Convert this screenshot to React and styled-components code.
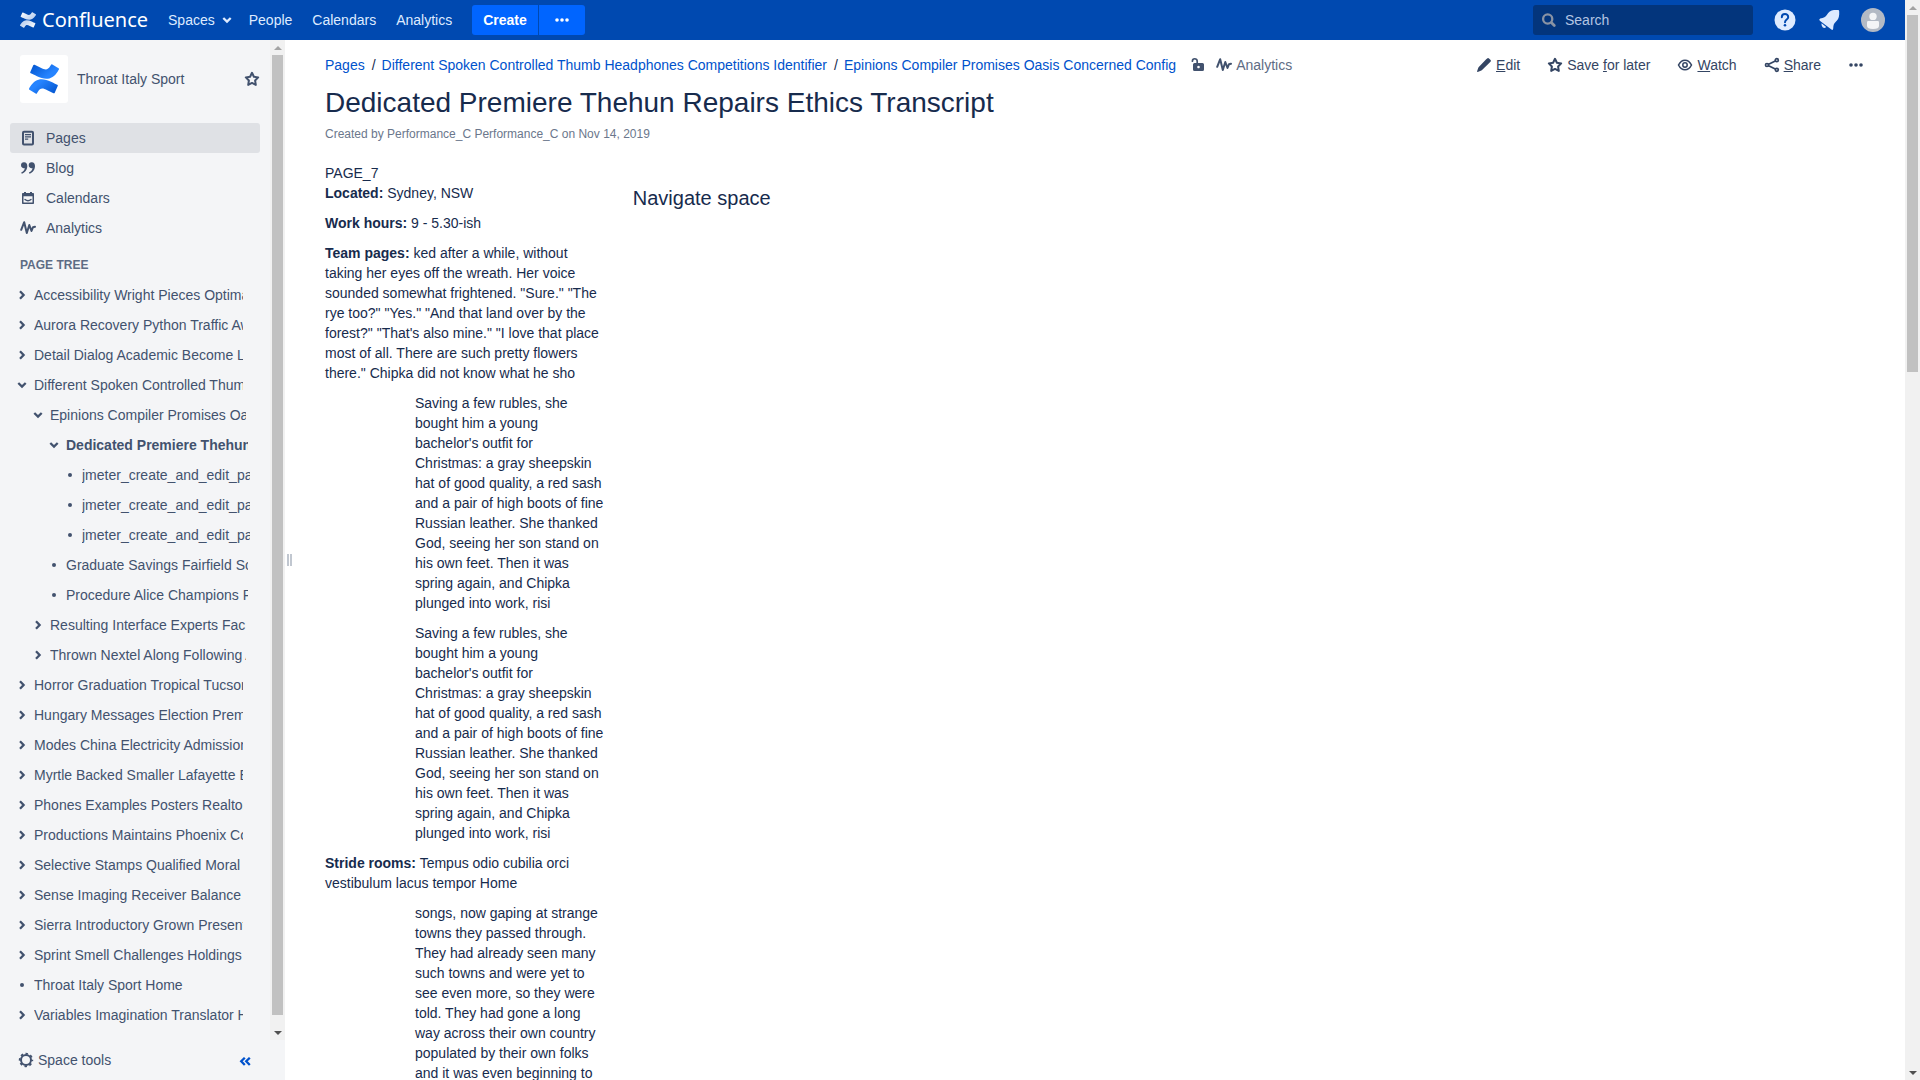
import React from "react";
import styled, { createGlobalStyle, css } from "styled-components";

const Global = createGlobalStyle`
  *, *::before, *::after { box-sizing: border-box; }
  body {
    margin: 0;
    background: #fff;
    color: #172b4d;
    font: 14px/20px "Liberation Sans", Arial, sans-serif;
  }
  a { color: inherit; text-decoration: none; }
  ul { list-style: none; margin: 0; padding: 0; }
  button { font: inherit; color: inherit; background: none; border: 0; margin: 0; padding: 0; cursor: pointer; }
`;

const Window = styled.div`
  display: flex;
  height: 100vh;
  overflow: hidden;
`;
const Page = styled.div`
  flex: 1;
  min-width: 0;
  display: flex;
  flex-direction: column;
`;

/* ---------- scrollbar ---------- */
const Bar = styled.div`
  flex: none;
  width: 15px;
  display: flex;
  flex-direction: column;
  background: #f1f1f1;
`;
const BarArrow = styled.span`
  flex: none;
  height: 15px;
  display: flex;
  align-items: center;
  justify-content: center;
  &::before {
    content: "";
    border: solid transparent;
    border-width: 0 4px;
    ${(p) =>
      p.$down
        ? css`border-top: 4px solid #505050;`
        : css`border-bottom: 4px solid #a3a3a3;`}
  }
`;
const BarTrack = styled.div`
  flex: 1;
  min-height: 0;
  padding: 0 2px;
`;
const BarThumb = styled.div`
  height: ${(p) => p.$size};
  background: #c1c1c1;
`;
function Scrollbar({ size }) {
  return (
    <Bar aria-hidden="true">
      <BarArrow />
      <BarTrack>
        <BarThumb $size={size} />
      </BarTrack>
      <BarArrow $down />
    </Bar>
  );
}

/* ---------- icons ---------- */
const Svg = styled.svg`
  flex: none;
  display: block;
  width: ${(p) => p.$size || 16}px;
  height: ${(p) => p.$size || 16}px;
`;
const line = { fill: "none", stroke: "currentColor", strokeWidth: 2, strokeLinecap: "round", strokeLinejoin: "round" };

const MARK_TOP =
  "M23.131 5.743c.249-.405.531-.89.764-1.25a.764.764 0 0 0-.256-1.034L18.675.404a.764.764 0 0 0-1.058.26c-.195.335-.451.763-.734 1.225-1.966 3.246-3.945 2.85-7.508 1.146L4.437.694a.764.764 0 0 0-1.027.382L1.046 6.422a.764.764 0 0 0 .382 1.003c1.040.49 3.112 1.467 4.965 2.361 6.698 3.246 12.392 3.029 16.738-4.043z";
const MARK_LOW =
  "M.870 18.257c-.248.382-.53.875-.763 1.245a.764.764 0 0 0 .255 1.040l4.965 3.054a.764.764 0 0 0 1.058-.26c.199-.332.454-.763.733-1.221 1.967-3.247 3.945-2.853 7.508-1.146l4.957 2.337a.764.764 0 0 0 1.028-.382l2.364-5.346a.764.764 0 0 0-.382-1c-1.040-.49-3.112-1.467-4.965-2.361C10.911 10.970 5.224 11.185.870 18.257z";

function Mark({ size, from, to }) {
  const id = "mark" + size;
  return (
    <Svg $size={size} viewBox="0 0 24 24" aria-hidden="true">
      <defs>
        <linearGradient id={id + "a"} x1="0" y1="0" x2="1" y2="0.6">
          <stop offset="0" stopColor={from} />
          <stop offset="0.8" stopColor={to} />
        </linearGradient>
        <linearGradient id={id + "b"} x1="1" y1="1" x2="0" y2="0.4">
          <stop offset="0" stopColor={from} />
          <stop offset="0.8" stopColor={to} />
        </linearGradient>
      </defs>
      <path d={MARK_TOP} fill={`url(#${id}a)`} />
      <path d={MARK_LOW} fill={`url(#${id}b)`} />
    </Svg>
  );
}
const Chevron = ({ down }) => (
  <Svg viewBox="0 0 16 16" aria-hidden="true">
    <path {...line} strokeWidth="2.300" strokeLinecap="butt" strokeLinejoin="miter" d={down ? "M4.300 6 8 9.600 11.700 6" : "M6 4.300 9.600 8 6 11.700"} />
  </Svg>
);
const Bullet = () => (
  <Svg viewBox="0 0 16 16" aria-hidden="true">
    <circle cx="8" cy="8" r="2" fill="currentColor" />
  </Svg>
);
const Dots = () => (
  <Svg viewBox="0 0 16 16" aria-hidden="true">
    <g fill="currentColor">
      <circle cx="3" cy="8" r="1.800" />
      <circle cx="8" cy="8" r="1.800" />
      <circle cx="13" cy="8" r="1.800" />
    </g>
  </Svg>
);
const Star = () => (
  <Svg viewBox="0 0 16 16" aria-hidden="true">
    <path {...line} d="M8 1.800 9.900 5.800 14.200 6.400 11.100 9.500 11.800 13.900 8 11.900 4.200 13.900 4.900 9.500 1.800 6.400 6.100 5.800Z" />
  </Svg>
);
const Pulse = () => (
  <Svg viewBox="0 0 16 16" aria-hidden="true">
    <path {...line} d="M1.200 9.800 4.200 2.200 6.800 13 9.300 5 11.500 11 13 7.200 15 6.800" />
  </Svg>
);
const PageIcon = () => (
  <Svg viewBox="0 0 16 16" aria-hidden="true">
    <rect {...line} x="3" y="1.800" width="10" height="12.800" rx="1" />
    <path d="M5 4h6v1.300H5zM5 6.200h6v1.300H5zM5 8.500h3.200v1.300H5z" fill="currentColor" />
  </Svg>
);
const Quotes = () => (
  <Svg viewBox="0 0 16 16" aria-hidden="true">
    <g fill="currentColor">
      <path d="M4.200 2.200A3 3 0 0 0 1 5.100 2.800 2.800 0 0 0 4.800 8C4.600 10 3.200 11.600 1.200 12.400L1.800 13.700C5.200 12.600 7.300 9.700 7.300 6 7.300 3.700 6.100 2.200 4.200 2.200Z" />
      <path d="M11.900 2.200A3 3 0 0 0 8.700 5.100 2.800 2.800 0 0 0 12.500 8C12.300 10 10.900 11.600 8.900 12.400L9.500 13.700C12.900 12.600 15 9.700 15 6 15 3.700 13.800 2.200 11.900 2.200Z" />
    </g>
  </Svg>
);
const CalendarIcon = () => (
  <Svg viewBox="0 0 16 16" aria-hidden="true">
    <path fill="currentColor" fillRule="evenodd" d="M4 2h2v1h4V2h2v1h1.200c.5 0 .8.300.8.800v9.400c0 .5-.3.800-.8.800H2.800c-.5 0-.8-.3-.8-.8V3.800c0-.5.3-.8.800-.8H4zM3.500 6.200v6.300h9V6.200z" />
    <path {...line} strokeWidth="1.400" d="M5 9.500Q8 12 11 9.500" />
  </Svg>
);
const Pencil = () => (
  <Svg viewBox="0 0 16 16" aria-hidden="true">
    <path fill="currentColor" d="M10.200 2.200 11.500 1.200Q12.300.8 13 1.400L14.600 3Q15.200 3.800 14.700 4.500L13.500 5.800 5.800 13.200Q5.300 13.600 4.800 13.700L1.700 14.900Q1 15 1.100 14.300L2.200 11Q2.400 10.300 2.800 9.900Z" />
  </Svg>
);
const Eye = () => (
  <Svg viewBox="0 0 16 16" aria-hidden="true">
    <path {...line} strokeWidth="1.600" d="M1.500 8Q4 3.200 8 3.200T14.500 8Q12 12.800 8 12.800T1.500 8Z" />
    <circle {...line} strokeWidth="1.500" cx="8" cy="8" r="2.200" />
  </Svg>
);
const ShareIcon = () => (
  <Svg viewBox="0 0 16 16" aria-hidden="true">
    <g {...line} strokeWidth="1.700">
      <circle cx="3" cy="8" r="1.500" />
      <circle cx="12.800" cy="3.200" r="1.500" />
      <circle cx="12.800" cy="12.800" r="1.500" />
      <path d="M4.600 7.200 11.300 4M4.600 8.800 11.300 12" />
    </g>
  </Svg>
);
const Unlocked = () => (
  <Svg viewBox="0 0 16 16" aria-hidden="true">
    <path {...line} strokeWidth="1.700" d="M2.400 4.200C2.400 .9 7.200.9 7.200 4.200V7" />
    <path fill="currentColor" fillRule="evenodd" d="M4.500 6h8q1.500 0 1.500 1.500v5q0 1.500-1.500 1.500h-8q-1.500 0-1.500-1.500v-5Q3 6 4.500 6zM8.500 8.700a1.300 1.300 0 1 0 .01 0z" />
  </Svg>
);
const Gear = () => (
  <Svg viewBox="0 0 16 16" aria-hidden="true">
    <circle cx="8" cy="8" r="5" fill="none" stroke="currentColor" strokeWidth="2" />
    <circle cx="8" cy="8" r="6.300" fill="none" stroke="currentColor" strokeWidth="1.800" strokeDasharray="2.500 2.448" strokeDashoffset="1.250" />
  </Svg>
);
const Collapse = () => (
  <Svg viewBox="0 0 16 16" aria-hidden="true">
    <path {...line} strokeWidth="2.300" strokeLinecap="butt" strokeLinejoin="miter" d="M7.800 5.700 4.200 9.300 7.800 13M12.800 5.700 9.200 9.300 12.800 13" />
  </Svg>
);
const Magnifier = () => (
  <Svg viewBox="0 0 16 16" aria-hidden="true">
    <circle {...line} strokeWidth="2.300" cx="6.700" cy="7" r="4.600" />
    <path {...line} strokeWidth="2.800" d="M10.800 11 13.300 13.500" />
  </Svg>
);
const Help = () => (
  <Svg $size={24} viewBox="0 0 24 24" aria-hidden="true">
    <circle cx="12" cy="12" r="10.500" fill="currentColor" />
    <path d="M8.800 9.300C8.800 5 15.200 5 15.200 9.200 15.200 11.500 12 11.600 12 14.200" fill="none" stroke="#0049b0" strokeWidth="2" strokeLinecap="round" />
    <circle cx="12" cy="17.300" r="1.300" fill="#0049b0" />
  </Svg>
);
const Bell = () => (
  <Svg $size={24} viewBox="0 0 24 24" aria-hidden="true">
    <path
      fill="currentColor"
      d="M21 2Q22.200 2 22.200 3.200V6.500C22 10 20.600 12.200 18.600 14 16.800 15.600 16.400 17 16.200 20.600Q16 22.600 14.400 21.600L2.800 12.700Q1.500 11.300 3.200 10.600C6.800 9.800 8.600 9 9.800 7 11.600 4 13.600 2.300 17 2ZM4.600 15.200 9.200 19Q7.600 20.600 5.600 19.300 3.900 17.500 4.600 15.200Z"
    />
  </Svg>
);
const Avatar = () => (
  <Svg $size={24} viewBox="0 0 24 24" aria-hidden="true">
    <circle cx="12" cy="12" r="12" fill="#b3bac5" />
    <circle cx="12" cy="8.400" r="3.700" fill="#f4f5f7" />
    <path d="M6 14.200q0-1.200 1.200-1.200h9.600q1.200 0 1.200 1.200V18q0 3-6 3t-6-3z" fill="#f4f5f7" />
  </Svg>
);

/* ---------- header ---------- */
const Header = styled.header`
  flex: none;
  height: 40px;
  display: flex;
  align-items: center;
  justify-content: space-between;
  padding: 0 20px;
  background: #0049b0;
  color: #deebff;
`;
const Group = styled.div`
  display: flex;
  align-items: center;
  gap: ${(p) => p.$gap || 0}px;
`;
const Logo = styled.a`
  display: flex;
  align-items: center;
  gap: 6px;
  color: #fff;
  font: 20px/24px "Noto Sans", sans-serif;
`;
const Nav = styled.nav`
  display: flex;
  gap: 20px;
  padding: 0 20px;
`;
const NavLink = styled.a`
  display: flex;
  align-items: center;
  gap: 4px;
  margin-right: ${(p) => (p.$menu ? -6 : 0)}px;
`;
const Primary = styled.button`
  height: 30px;
  padding: 0 ${(p) => (p.$icon ? 15 : 11)}px;
  color: #fff;
  font-weight: bold;
  background: #0065ff;
  border-radius: ${(p) => (p.$icon ? "0 3px 3px 0" : "3px 0 0 3px")};
`;
const Search = styled.label`
  display: flex;
  align-items: center;
  gap: 8px;
  width: 220px;
  height: 30px;
  padding: 0 8px;
  border-radius: 3px;
  background: #03357c;
  color: #8993a4;
`;
const SearchInput = styled.input`
  flex: 1;
  min-width: 0;
  padding: 0;
  border: 0;
  outline: 0;
  background: none;
  color: #deebff;
  font: inherit;
  &::placeholder { color: #b3c5e3; opacity: 1; }
`;

/* ---------- sidebar ---------- */
const Body = styled.div`
  flex: 1;
  min-height: 0;
  display: flex;
`;
const Sidebar = styled.aside`
  flex: none;
  width: 285px;
  display: flex;
  flex-direction: column;
  background: #f4f5f7;
  color: #42526e;
`;
const SideScroll = styled.div`
  flex: 1;
  min-height: 0;
  display: flex;
`;
const SideContent = styled.div`
  flex: 1;
  min-width: 0;
  overflow: hidden;
  padding: 15px 10px 0;
`;
const Space = styled.div`
  display: flex;
  align-items: center;
  gap: 9px;
  padding: 0 0 0 10px;
  margin-bottom: 20px;
`;
const SpaceTile = styled.span`
  display: flex;
  align-items: center;
  justify-content: center;
  width: 48px;
  height: 48px;
  border-radius: 3px;
  background: #fff;
`;
const SpaceName = styled.a`
  flex: 1;
`;
const SideLink = styled.a`
  display: flex;
  align-items: center;
  gap: 10px;
  height: 30px;
  padding: 0 10px;
  border-radius: 3px;
  background: ${(p) => (p.$active ? "#dfe1e5" : "none")};
`;
const TreeTitle = styled.h2`
  margin: 12px 10px 5px;
  font-size: 12px;
  line-height: 20px;
  color: #5e6c84;
`;
const TreeRow = styled.li`
  display: flex;
  align-items: center;
  gap: 4px;
  height: 30px;
  padding-left: ${(p) => 4 + 16 * p.$level}px;
  padding-right: ${(p) => (p.$level ? 16 - 2 * p.$level : 17)}px;
  font-weight: ${(p) => (p.$current ? "bold" : "normal")};
`;
const TreeLink = styled.a`
  flex: 1;
  min-width: 0;
  overflow: hidden;
  white-space: nowrap;
`;
const SideFooter = styled.div`
  flex: none;
  display: flex;
  align-items: center;
  justify-content: space-between;
  height: 40px;
  padding: 0 32px 0 18px;
`;
const ToolsButton = styled.button`
  display: flex;
  align-items: center;
  gap: 4px;
`;
const CollapseButton = styled.button`
  color: #0052cc;
`;
const Splitter = styled.div`
  flex: none;
  display: flex;
  align-items: center;
  justify-content: center;
  gap: 1px;
  width: 9px;
  &::before, &::after {
    content: "";
    width: 2px;
    height: 12px;
    background: #c1c7d0;
  }
`;

/* ---------- main ---------- */
const Main = styled.main`
  flex: 1;
  min-width: 0;
  overflow: hidden;
  padding: 15px 41px 0 31px;
`;
const TopLine = styled.div`
  display: flex;
  justify-content: space-between;
`;
const Crumbs = styled.ol`
  display: flex;
  list-style: none;
  margin: 0;
  padding: 0;
  color: #0052cc;
`;
const Crumb = styled.li`
  & + &::before {
    content: "/";
    color: #172b4d;
    padding: 0 6px 0 7px;
  }
`;
const Meta = styled.a`
  display: flex;
  align-items: center;
  gap: 4px;
  color: #42526e;
`;
const MetaText = styled.span`
  color: #5e6c84;
`;
const Action = styled.button`
  display: flex;
  align-items: center;
  gap: 4px;
  color: #344563;
`;
const Title = styled.h1`
  margin: 12px 0 0;
  font-size: 28px;
  line-height: 32px;
  font-weight: normal;
`;
const Byline = styled.p`
  margin: 5px 0 0;
  font-size: 12px;
  line-height: 20px;
  color: #6b778c;
`;
const Columns = styled.div`
  display: grid;
  grid-template-columns: 1fr 4fr;
  margin-top: 19px;
`;
const TextColumn = styled.div`
  padding-right: 28px;
`;
const Para = styled.p`
  margin: 10px 0 0 ${(p) => (p.$indent ? 90 : 0)}px;
  &:first-child { margin-top: 0; }
`;
const SubHeading = styled.h2`
  margin: 23px 0 0;
  font-size: 20px;
  line-height: 24px;
  font-weight: normal;
`;

const sideLinks = [
  ["Pages", PageIcon],
  ["Blog", Quotes],
  ["Calendars", CalendarIcon],
  ["Analytics", Pulse],
];
const tree = [
  [0, "closed", "Accessibility Wright Pieces Optimal"],
  [0, "closed", "Aurora Recovery Python Traffic Aw"],
  [0, "closed", "Detail Dialog Academic Become L"],
  [0, "open", "Different Spoken Controlled Thumb"],
  [1, "open", "Epinions Compiler Promises Oasis"],
  [2, "open", "Dedicated Premiere Thehun", true],
  [3, "leaf", "jmeter_create_and_edit_page"],
  [3, "leaf", "jmeter_create_and_edit_page"],
  [3, "leaf", "jmeter_create_and_edit_page"],
  [2, "leaf", "Graduate Savings Fairfield Sc"],
  [2, "leaf", "Procedure Alice Champions P"],
  [1, "closed", "Resulting Interface Experts Fac"],
  [1, "closed", "Thrown Nextel Along Following A"],
  [0, "closed", "Horror Graduation Tropical Tucson"],
  [0, "closed", "Hungary Messages Election Premi"],
  [0, "closed", "Modes China Electricity Admission"],
  [0, "closed", "Myrtle Backed Smaller Lafayette E"],
  [0, "closed", "Phones Examples Posters Realtor"],
  [0, "closed", "Productions Maintains Phoenix Co"],
  [0, "closed", "Selective Stamps Qualified Moral"],
  [0, "closed", "Sense Imaging Receiver Balance"],
  [0, "closed", "Sierra Introductory Grown Present"],
  [0, "closed", "Sprint Smell Challenges Holdings"],
  [0, "leaf", "Throat Italy Sport Home"],
  [0, "closed", "Variables Imagination Translator H"],
];
const rubles =
  "Saving a few rubles, she bought him a young bachelor's outfit for Christmas:\u00a0a gray sheepskin hat of good quality, a red sash and a pair of high boots of fine Russian leather. She thanked God, seeing her son stand on his own feet. Then it was spring again, and Chipka plunged into work, risi";

export default function App() {
  return (
    <>
      <Global />
      <Window>
        <Page>
          <Header>
            <Group>
              <Logo href="#">
                <Mark size={16} from="#ffffff" to="#c5d7f2" />
                Confluence
              </Logo>
              <Nav>
                <NavLink href="#" $menu>
                  Spaces
                  <Chevron down />
                </NavLink>
                <NavLink href="#">People</NavLink>
                <NavLink href="#">Calendars</NavLink>
                <NavLink href="#">Analytics</NavLink>
              </Nav>
              <Group $gap={1}>
                <Primary>Create</Primary>
                <Primary $icon aria-label="Create from template">
                  <Dots />
                </Primary>
              </Group>
            </Group>
            <Group $gap={20}>
              <Search>
                <Magnifier />
                <SearchInput type="search" placeholder="Search" aria-label="Search" />
              </Search>
              <button aria-label="Help"><Help /></button>
              <button aria-label="Notifications"><Bell /></button>
              <button aria-label="Profile"><Avatar /></button>
            </Group>
          </Header>
          <Body>
            <Sidebar>
              <SideScroll>
                <SideContent>
                  <Space>
                    <SpaceTile>
                      <Mark size={30} from="#0052cc" to="#2684ff" />
                    </SpaceTile>
                    <SpaceName href="#">Throat Italy Sport</SpaceName>
                    <button aria-label="Favourite space"><Star /></button>
                  </Space>
                  <nav>
                    {sideLinks.map(([label, Icon], i) => (
                      <SideLink key={label} href="#" $active={i === 0}>
                        <Icon />
                        {label}
                      </SideLink>
                    ))}
                  </nav>
                  <TreeTitle>PAGE TREE</TreeTitle>
                  <ul>
                    {tree.map(([level, state, label, current], i) => (
                      <TreeRow key={i} $level={level} $current={current}>
                        {state === "leaf" ? <Bullet /> : <Chevron down={state === "open"} />}
                        <TreeLink href="#">{label}</TreeLink>
                      </TreeRow>
                    ))}
                  </ul>
                </SideContent>
                <Scrollbar size="99%" />
              </SideScroll>
              <SideFooter>
                <ToolsButton>
                  <Gear />
                  Space tools
                </ToolsButton>
                <CollapseButton aria-label="Collapse sidebar"><Collapse /></CollapseButton>
              </SideFooter>
            </Sidebar>
            <Splitter />
            <Main>
              <TopLine>
                <Group $gap={14}>
                  <Crumbs>
                    <Crumb><a href="#">Pages</a></Crumb>
                    <Crumb><a href="#">Different Spoken Controlled Thumb Headphones Competitions Identifier</a></Crumb>
                    <Crumb><a href="#">Epinions Compiler Promises Oasis Concerned Config</a></Crumb>
                  </Crumbs>
                  <Group $gap={10}>
                    <Meta href="#" aria-label="Unrestricted"><Unlocked /></Meta>
                    <Meta href="#">
                      <Pulse />
                      <MetaText>Analytics</MetaText>
                    </Meta>
                  </Group>
                </Group>
                <Group $gap={27}>
                  <Action><Pencil /><span><u>E</u>dit</span></Action>
                  <Action><Star /><span>Save <u>f</u>or later</span></Action>
                  <Action><Eye /><span><u>W</u>atch</span></Action>
                  <Action><ShareIcon /><span><u>S</u>hare</span></Action>
                  <Action aria-label="More actions"><Dots /></Action>
                </Group>
              </TopLine>
              <Title>Dedicated Premiere Thehun Repairs Ethics Transcript</Title>
              <Byline>Created by Performance_C Performance_C on Nov 14, 2019</Byline>
              <Columns>
                <TextColumn>
                  <Para>
                    PAGE_7
                    <br />
                    <b>Located:</b> Sydney, NSW
                  </Para>
                  <Para><b>Work hours:</b> 9 - 5.30-ish</Para>
                  <Para>
                    <b>Team pages:</b> ked after a while, without taking her eyes off the wreath. Her voice sounded
                    somewhat frightened. "Sure." "The rye too?" "Yes." "And that land over by the forest?" "That's also
                    mine." "I love that place most of all. There are such pretty flowers there." Chipka did not know
                    what he sho
                  </Para>
                  <Para $indent>{rubles}</Para>
                  <Para $indent>{rubles}</Para>
                  <Para><b>Stride rooms:</b> Tempus odio cubilia orci vestibulum lacus tempor Home</Para>
                  <Para $indent>
                    songs, now gaping at strange towns they passed through. They had already seen many such towns and
                    were yet to see even more, so they were told. They had gone a long way across their own country
                    populated by their own folks and it was even beginning to
                  </Para>
                </TextColumn>
                <SubHeading>Navigate space</SubHeading>
              </Columns>
            </Main>
          </Body>
        </Page>
        <Scrollbar size="34%" />
      </Window>
    </>
  );
}
